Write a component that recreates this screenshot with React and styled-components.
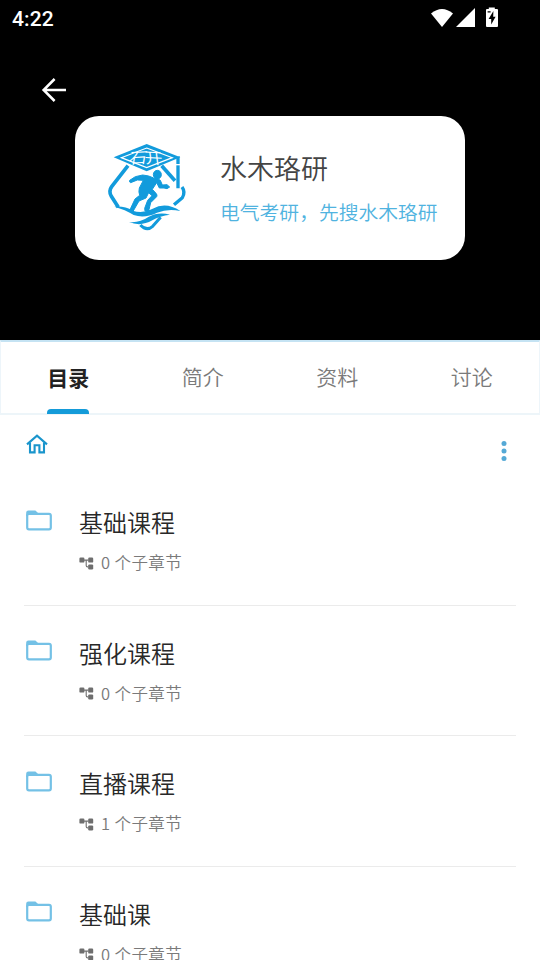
import React from 'react';
import styled, { createGlobalStyle } from 'styled-components';

const tabs = ['目录', '简介', '资料', '讨论'];

const chapters = [
  { title: '基础课程', count: 0 },
  { title: '强化课程', count: 0 },
  { title: '直播课程', count: 1 },
  { title: '基础课', count: 0 },
];

const SignalIcons = () => (
  <svg width="70" height="22" viewBox="0 0 70 22" fill="#fff">
    <path d="M1 5.6 Q12 -3.6 23 5.6 L12 19 Z" />
    <path d="M26 19 L45 0 V19 Z" />
    <path d="M58.8 -0.6 h6 v1.6 h2.2 q1 0 1 1 v16 q0 1 -1 1 h-10 q-1 0 -1 -1 v-16 q0 -1 1 -1 h1.8 z" />
    <path d="M57.6 3.2 H60.6 V4.6 H57.6 Z M63.4 3 L58.6 11 H61.2 V16.6 L65.6 8.8 H63.2 Z" fill="#000" />
  </svg>
);

const BackIcon = () => (
  <svg width="26" height="26" viewBox="0 0 26 26" fill="none" stroke="#fff" strokeWidth="2.5">
    <path d="M25 13 H2.5 M13.6 2 L2.6 13 L13.6 24" />
  </svg>
);

const Logo = () => (
  <svg width="110" height="110" viewBox="0 0 330 330" fill="#129bdc">
    {/* 菱形外框 */}
    <g fill="none" stroke="#129bdc" strokeWidth="11" strokeLinejoin="round">
      <path d="M99 107 L50 170 Q40 184 49 199 L70 232" />
      <path d="M200 107 L240 152" />
      <path d="M261 171 Q272 186 262 203 L237 224" strokeWidth="10" />
      <path d="M136 285 Q155 305 173 289 L197 262" strokeWidth="9" />
    </g>
    {/* 学士帽 */}
    <path d="M155 42 L256 82 L155 124 L56 82 Z" />
    <path d="M155 54 L232 83 L155 113 L79 83 Z" fill="none" stroke="#fff" strokeWidth="3.5" />
    <g fill="#fff" fontSize="50" fontFamily='"Noto Sans CJK SC", sans-serif' fontWeight="350">
      <text transform="matrix(1.08 -0.06 -0.16 0.92 100 101)">石</text>
      <text transform="matrix(1.08 0.06 0.12 0.92 151 100)">开</text>
    </g>
    <path d="M244 82 L254 78 V175 H244 Z" />
    <path d="M241 104 H257" stroke="#fff" strokeWidth="4" />
    {/* 跑步的人 */}
    <g stroke="#129bdc" strokeWidth="3" strokeLinejoin="round">
      <ellipse cx="187" cy="134" rx="12" ry="13" />
      <path d="M176 144 Q161 136 143 135 L121 140 L104 151 Q102 157 107 158 L127 150 L145 151 L133 174 Q130 185 134 196 L120 207 L107 235 L102 241 L113 246 L132 213 L153 204 L161 188 L171 197 L158 211 L149 235 L150 243 L165 246 L162 239 L167 218 L185 200 Q188 195 183 190 L172 178 L185 158 L193 174 L207 174 L216 176 L224 171 L216 164 L202 165 L196 151 Q190 145 176 144 Z" />
    </g>
    {/* 水波 */}
    <path d="M58 230 Q89 227 113 242 Q143 253 173 236 Q213 214 256 243 Q219 235 186 248 Q149 266 116 255 Q91 239 58 230 Z" />
    <path d="M102 276 Q135 279 160 261 Q190 245 225 254 Q195 257 172 271 Q137 291 102 276 Z" />
  </svg>
);

const HomeIcon = () => (
  <svg width="22" height="20" viewBox="0 0 22 20" fill="none" stroke="#1a95cc" strokeWidth="2.1">
    <path d="M1 10.4 L11 1.6 L21 10.4" />
    <path d="M4 8.4 V18.4 H8.6 V11.2 H13.4 V18.4 H18 V8.4" />
  </svg>
);

const MoreIcon = () => (
  <svg width="6" height="20" viewBox="0 0 6 20" fill="#55a9d6">
    <circle cx="3" cy="2.5" r="2.5" />
    <circle cx="3" cy="10" r="2.5" />
    <circle cx="3" cy="17.5" r="2.5" />
  </svg>
);

const FolderIcon = () => (
  <svg width="26" height="21" viewBox="0 0 26 21">
    <path d="M0.2 6 V2.6 Q0.2 0.4 2.4 0.4 H9.4 L12.6 3.4 V6 Z" fill="#74c1e6" />
    <rect x="1.2" y="3.8" width="23.6" height="15.6" rx="1.8" fill="#fff" stroke="#74c1e6" strokeWidth="2.2" />
  </svg>
);

const TreeIcon = () => (
  <svg width="15" height="13" viewBox="0 0 15 13" fill="#6e6e6e">
    <rect x="0.4" y="0.6" width="5" height="5" rx="1.2" />
    <rect x="9.2" y="0.6" width="5" height="5" rx="1.2" />
    <rect x="9.2" y="7.4" width="5" height="5" rx="1.2" />
    <path d="M5 3.1 H9.5 M7.2 3.1 V8.4 Q7.2 9.9 8.7 9.9 H9.5" fill="none" stroke="#6e6e6e" strokeWidth="1.1" />
  </svg>
);

const App = () => {
  return (
    <Page>
      <GlobalStyle />
      <Header>
        <StatusBar>
          <span>4:22</span>
          <SignalIcons />
        </StatusBar>
        <BackButton type="button" aria-label="返回">
          <BackIcon />
        </BackButton>
        <Card>
          <Logo />
          <CardText>
            <CardTitle>水木珞研</CardTitle>
            <CardDesc>电气考研，先搜水木珞研</CardDesc>
          </CardText>
        </Card>
      </Header>
      <TabBar>
        {tabs.map((tab, i) => (
          <Tab key={tab} $active={i === 0}>
            {tab}
          </Tab>
        ))}
      </TabBar>
      <Toolbar>
        <HomeIcon />
        <MoreIcon />
      </Toolbar>
      <List>
        {chapters.map(({ title, count }, i) => (
          <Row key={i}>
            <FolderIcon />
            <div>
              <RowTitle>{title}</RowTitle>
              <RowMeta>
                <TreeIcon />
                <span>{count} 个子章节</span>
              </RowMeta>
            </div>
          </Row>
        ))}
      </List>
    </Page>
  );
};

export default App;

const GlobalStyle = createGlobalStyle`
  * {
    box-sizing: border-box;
  }
  body {
    margin: 0;
    background-color: #fff;
    overflow: hidden;
  }
`;

const Page = styled.div`
  width: 540px;
  height: 960px;
  overflow: hidden;
  background-color: #fff;
  font-family: 'Noto Sans CJK SC', sans-serif;
  font-weight: 350;
`;

const Header = styled.header`
  height: 340px;
  background-color: #000;
`;

const StatusBar = styled.div`
  display: flex;
  justify-content: space-between;
  height: 76px;
  padding: 8px 40px 0 12px;
  color: #fff;
  font-family: Roboto, sans-serif;
  font-size: 21px;
  font-weight: 500;
  letter-spacing: 0.1px;
  line-height: 22px;
  svg {
    overflow: visible;
  }
`;

const BackButton = styled.button`
  display: block;
  width: 26px;
  height: 26px;
  margin: 1px 0 13px 41px;
  padding: 0;
  border: none;
  background: none;
`;

const Card = styled.section`
  display: flex;
  width: 390px;
  height: 144px;
  margin: 0 auto;
  padding: 14px 20px;
  border-radius: 24px;
  background-color: #fff;
`;

const CardText = styled.div`
  margin-left: 15px;
  padding-top: 18px;
  white-space: nowrap;
`;

const CardTitle = styled.h1`
  margin: 0;
  color: #444;
  font-size: 27px;
  font-weight: 350;
  line-height: 40px;
`;

const CardDesc = styled.p`
  margin: 9px 0 0;
  color: #50b3e0;
  font-size: 19.8px;
  line-height: 30px;
`;

const TabBar = styled.nav`
  display: flex;
  height: 75px;
  border: 1px solid #edf5fa;
  border-top: 2px solid #c5e3f3;
  border-bottom: 2px solid #edf5f9;
`;

const Tab = styled.div`
  position: relative;
  flex: 1;
  color: ${({ $active }) => ($active ? '#222' : '#7a7a7a')};
  font-size: 21px;
  font-weight: ${({ $active }) => ($active ? 700 : 350)};
  line-height: ${({ $active }) => ($active ? 70 : 68)}px;
  text-align: center;
  &::after {
    content: '';
    display: ${({ $active }) => ($active ? 'block' : 'none')};
    position: absolute;
    bottom: -1px;
    left: 46px;
    width: 42px;
    height: 5px;
    border-radius: 4px 4px 0 0;
    background-color: #149bd9;
  }
`;

const Toolbar = styled.div`
  display: flex;
  justify-content: space-between;
  height: 60px;
  padding: 19px 33px 0 26px;
  svg:last-child {
    margin-top: 7px;
  }
`;

const List = styled.ul`
  margin: 0;
  padding: 0 24px;
  list-style: none;
`;

const Row = styled.li`
  display: flex;
  align-items: flex-start;
  gap: 27px;
  height: 130.5px;
  padding: 29px 0 0 2px;
  border-bottom: 1px solid #ebebeb;
  > svg {
    margin-top: 5.5px;
  }
`;

const RowTitle = styled.h2`
  margin: 0;
  color: #282828;
  font-size: 24px;
  font-weight: 350;
  line-height: 36px;
`;

const RowMeta = styled.div`
  display: flex;
  align-items: center;
  gap: 7px;
  margin-top: 10px;
  color: #7a7a7a;
  font-size: 16.5px;
  letter-spacing: 0.4px;
  line-height: 24px;
  svg {
    margin-top: 2px;
  }
`;
